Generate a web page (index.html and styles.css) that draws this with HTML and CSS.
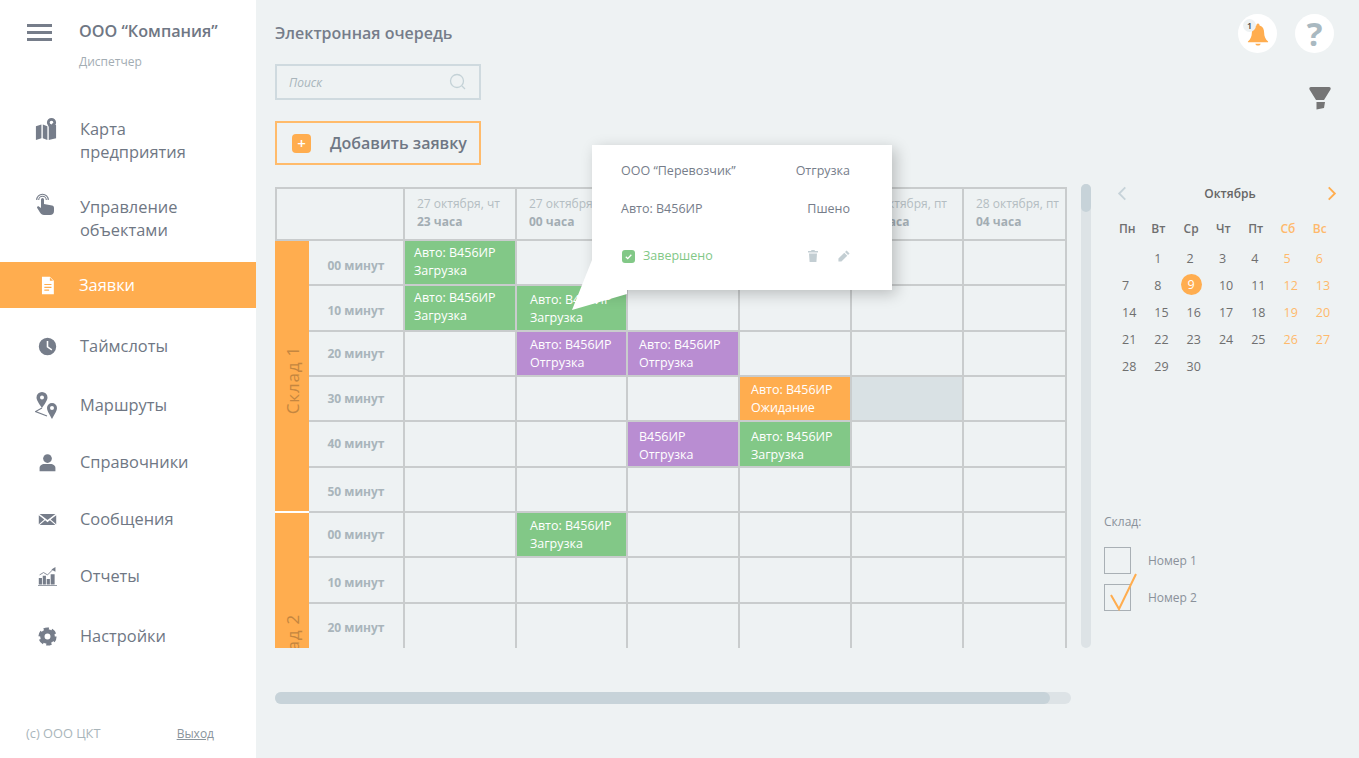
FILE: index.html
```html
<!DOCTYPE html>
<html lang="ru">
<head>
  <meta charset="utf-8">
  <title>Электронная очередь</title>
  <link rel="stylesheet" href="styles.css">
</head>
<body>
<div class="app">
  <aside class="sidebar">
    <div class="brand">
      <div class="burger"><span></span><span></span><span></span></div>
      <div>
        <div class="brand-name">ООО “Компания”</div>
        <div class="brand-role">Диспетчер</div>
      </div>
    </div>

    <nav class="nav">
      <a class="nav-item nav-item-top">
        <svg class="nav-icon" viewBox="0 0 24 24"><path d="M1 9l6-2v15l-6 2zM8.500 7l5 2v15l-5-2zM15 9l2 1 2-4 .5-.500L23 8v14l-8 2z"/><path fill-rule="evenodd" d="M18 0a5 5 0 0 1 5 5c0 2.500-3 6-5 8-2-2-5-5.500-5-8a5 5 0 0 1 5-5zm0 3a2 2 0 1 0 0 4 2 2 0 0 0 0-4z"/></svg>
        <span>Карта<br>предприятия</span>
      </a>
      <a class="nav-item nav-item-top">
        <svg class="nav-icon nav-icon-hand" viewBox="0 0 18 22"><path d="M5 6.500a1.500 1.500 0 0 1 3 0V11l8 1.500c1.200.3 2 1 2 2.500v3c0 2.500-1.500 4-4 4H8c-2 0-3-1-4-2.500L1.200 15c-.7-1.200.8-2.400 2-1.300L5 15z"/><path class="line" d="M2.700 7a3.800 3.800 0 1 1 7.600 0M.7 7a5.800 5.800 0 1 1 11.600 0"/></svg>
        <span>Управление<br>объектами</span>
      </a>
      <a class="nav-item nav-item-active">
        <svg class="nav-icon nav-icon-sm" viewBox="0 0 24 24"><path fill-rule="evenodd" d="M5 1h10l5 5v17H5zm3 9v1.500h9V10zm0 3.500V15h9v-1.500zm0 3.500v1.500h6V17zM15 2v4h4z"/></svg>
        <span>Заявки</span>
      </a>
      <a class="nav-item">
        <svg class="nav-icon nav-icon-sm" viewBox="0 0 24 24"><path fill-rule="evenodd" d="M12 1a11 11 0 1 1 0 22 11 11 0 0 1 0-22zm-1 4v8l6 4 1-1.500-5-3.500V5z"/></svg>
        <span>Таймслоты</span>
      </a>
      <a class="nav-item">
        <svg class="nav-icon nav-icon-route" viewBox="0 0 22 27"><path fill-rule="evenodd" d="M7 0a5.500 5.500 0 0 1 5.500 5.500C12.500 8.500 9 13 7 16 5 13 1.500 8.500 1.500 5.500A5.500 5.500 0 0 1 7 0zm0 3.500a2 2 0 1 0 0 4 2 2 0 0 0 0-4zM17 11a5 5 0 0 1 5 5c0 3-3.200 7.500-5 11-1.800-3.500-5-8-5-11a5 5 0 0 1 5-5zm0 3a2 2 0 1 0 0 4 2 2 0 0 0 0-4z"/><path class="line" d="M7 16l-6.500 3.500L12 24"/></svg>
        <span>Маршруты</span>
      </a>
      <a class="nav-item">
        <svg class="nav-icon nav-icon-sm" viewBox="0 0 24 24"><circle cx="12" cy="7" r="5.500"/><path d="M2 23v-4c0-3 3-5 6-5h8c3 0 6 2 6 5v4z"/></svg>
        <span>Справочники</span>
      </a>
      <a class="nav-item">
        <svg class="nav-icon nav-icon-sm" viewBox="0 0 24 24"><path d="M2 5h20l-10 7.500zM1 6.500l7 5.500-7 6zM23 6.500v11.500l-7-6zM9 13l3 2.500 3-2.500 7 6H2z"/></svg>
        <span>Сообщения</span>
      </a>
      <a class="nav-item">
        <svg class="nav-icon nav-icon-sm" viewBox="0 0 24 24"><path d="M1 14h4v8H1zM6 11h4v11H6zM11 15h4v7h-4zM16 9h5v13h-5zM0 23h24v1H0z"/><path class="line" d="M2 10l5-3 5 3 7-7"/><path d="M22 0v6l-5-3z"/></svg>
        <span>Отчеты</span>
      </a>
      <a class="nav-item">
        <svg class="nav-icon nav-icon-sm" viewBox="0 0 24 24"><circle class="gear-teeth" cx="12" cy="12" r="9.500"/><circle class="gear-ring" cx="12" cy="12" r="6.500"/></svg>
        <span>Настройки</span>
      </a>
    </nav>

    <div class="side-foot">
      <span class="copy">(c) ООО ЦКТ</span>
      <a class="logout">Выход</a>
    </div>
  </aside>

  <main class="main">
    <div class="top">
      <div>
        <h1 class="title">Электронная очередь</h1>
        <div class="search">
          <span>Поиск</span>
          <svg class="search-icon" viewBox="0 0 18 18"><circle cx="8" cy="8" r="6.500"/><path d="M13 13l3 3"/></svg>
        </div>
        <button class="add-btn"><span class="add-icon">+</span>Добавить заявку</button>
      </div>
      <div class="top-right">
        <div class="round-btns">
          <div class="round-btn">
            <svg class="bell" viewBox="0 0 24 24"><path d="M12 0c1 0 1.700 1 1.700 2.200 3.600 1 5 4 5 7.800 0 4 1.300 7 4.300 9.500v1H1v-1c3-2.500 4.300-5.500 4.300-9.500 0-3.800 1.400-6.800 5-7.800C10.300 1 11 0 12 0zM9 22h6c-.5 1.500-1.500 2-3 2s-2.500-.5-3-2z"/></svg>
            <span class="bell-badge">1</span>
          </div>
          <div class="round-btn help">?</div>
        </div>
        <svg class="funnel" viewBox="0 0 24 24"><path d="M3 1h18c1.500 0 2 1 1.500 2.500L16 14H8L1.500 3.500C1 2 1.500 1 3 1zM8.500 16H17l-1 6-7.500 1.500z"/></svg>
      </div>
    </div>

    <div class="board">
      <div class="table-wrap">
        <div class="table">
          <div class="group group-first"><span>Склад 1</span></div>
          <div class="group group-second"><span>Склад 2</span></div>

          <div class="head-blank"></div>
          <div class="head"><span>27 октября, чт</span><b>23 часа</b></div>
          <div class="head"><span>27 октября, чт</span><b>00 часа</b></div>
          <div class="head"><span>28 октября, пт</span><b>01 часа</b></div>
          <div class="head"><span>28 октября, пт</span><b>02 часа</b></div>
          <div class="head"><span>28 октября, пт</span><b>03 часа</b></div>
          <div class="head"><span>28 октября, пт</span><b>04 часа</b></div>

          <div class="label low">00 минут</div>
          <div class="cell ev green tight">Авто: В456ИР<br>Загрузка</div>
          <div class="cell"></div><div class="cell"></div><div class="cell"></div><div class="cell"></div><div class="cell"></div>

          <div class="label low">10 минут</div>
          <div class="cell ev green tight">Авто: В456ИР<br>Загрузка</div>
          <div class="cell ev green wide drop">Авто: В456ИР<br>Загрузка</div>
          <div class="cell"></div><div class="cell"></div><div class="cell"></div><div class="cell"></div>

          <div class="label">20 минут</div>
          <div class="cell"></div>
          <div class="cell ev purple wide">Авто: В456ИР<br>Отгрузка</div>
          <div class="cell ev purple mid">Авто: В456ИР<br>Отгрузка</div>
          <div class="cell"></div><div class="cell"></div><div class="cell"></div>

          <div class="label">30 минут</div>
          <div class="cell"></div><div class="cell"></div><div class="cell"></div>
          <div class="cell ev orange mid">Авто: В456ИР<br>Ожидание</div>
          <div class="cell grey"></div>
          <div class="cell"></div>

          <div class="label">40 минут</div>
          <div class="cell"></div><div class="cell"></div>
          <div class="cell ev purple mid deep">В456ИР<br>Отгрузка</div>
          <div class="cell ev green mid deep">Авто: В456ИР<br>Загрузка</div>
          <div class="cell"></div><div class="cell"></div>

          <div class="label low">50 минут</div>
          <div class="cell"></div><div class="cell"></div><div class="cell"></div><div class="cell"></div><div class="cell"></div><div class="cell"></div>

          <div class="label">00 минут</div>
          <div class="cell"></div>
          <div class="cell ev green wide">Авто: В456ИР<br>Загрузка</div>
          <div class="cell"></div><div class="cell"></div><div class="cell"></div><div class="cell"></div>

          <div class="label low">10 минут</div>
          <div class="cell"></div><div class="cell"></div><div class="cell"></div><div class="cell"></div><div class="cell"></div><div class="cell"></div>

          <div class="label">20 минут</div>
          <div class="cell"></div><div class="cell"></div><div class="cell"></div><div class="cell"></div><div class="cell"></div><div class="cell"></div>
        </div>

        <div class="popup">
          <svg class="popup-tail" viewBox="0 0 60 60"><path d="M22 0L0 55l55-16V0z"/></svg>
          <div class="popup-row"><span>ООО “Перевозчик”</span><span>Отгрузка</span></div>
          <div class="popup-row"><span>Авто: В456ИР</span><span>Пшено</span></div>
          <div class="popup-foot">
            <span class="done-box"><svg viewBox="0 0 12 12"><path d="M3.500 6.200l1.800 1.800 3.300-3.600"/></svg></span>
            <span class="done-text">Завершено</span>
            <svg class="popup-icon" viewBox="0 0 12 12"><path d="M4.500 0h3l.5 1h3v1.500H1V1h3zM2 3.500h8l-.6 8.500H2.600z"/></svg>
            <svg class="popup-icon" viewBox="0 0 14 14"><path d="M10 .5l3.500 3.500-1.800 1.800L8.200 2.300zM7.300 3.200l3.500 3.500L4 13.500H.5V10z"/></svg>
          </div>
        </div>
      </div>

      <div class="vbar"><div class="vbar-thumb"></div></div>

      <div class="side">
        <div class="cal-head">
          <svg class="chev chev-off" viewBox="0 0 10 16"><path d="M8.500 1.500L2 8l6.500 6.500"/></svg>
          <span class="cal-title">Октябрь</span>
          <svg class="chev" viewBox="0 0 10 16"><path d="M1.500 1.500L8 8l-6.500 6.500"/></svg>
        </div>
        <div class="cal-week">
          <span>Пн</span><span>Вт</span><span>Ср</span><span>Чт</span><span>Пт</span><span class="we">Сб</span><span class="we">Вс</span>
        </div>
        <div class="cal-days">
          <span></span><span>1</span><span>2</span><span>3</span><span>4</span><span class="we">5</span><span class="we">6</span>
          <span>7</span><span>8</span><span class="today">9</span><span>10</span><span>11</span><span class="we">12</span><span class="we">13</span>
          <span>14</span><span>15</span><span>16</span><span>17</span><span>18</span><span class="we">19</span><span class="we">20</span>
          <span>21</span><span>22</span><span>23</span><span>24</span><span>25</span><span class="we">26</span><span class="we">27</span>
          <span>28</span><span>29</span><span>30</span>
        </div>

        <div class="stores">
          <div class="stores-title">Склад:</div>
          <div class="store"><span class="box"></span>Номер 1</div>
          <div class="store">
            <span class="box"><svg class="tick" viewBox="0 0 30 40"><path d="M1 22l8 14L26 1"/></svg></span>Номер 2
          </div>
        </div>
      </div>
    </div>

    <div class="hbar"><div class="hbar-thumb"></div></div>
  </main>
</div>
</body>
</html>
```

FILE: styles.css
```css
* {
  box-sizing: border-box;
}

html, body {
  height: 100%;
  margin: 0;
}

body {
  font-family: "Open Sans", "Noto Sans", sans-serif;
  color: #6f7784;
  background-color: #eef2f3;
  overflow: hidden;
}

.app {
  display: flex;
  height: 758px;
}

/* sidebar */
.sidebar {
  width: 256px;
  flex: none;
  background-color: #fff;
  display: flex;
  flex-direction: column;
}

.brand {
  display: flex;
  padding: 21px 0 0 27px;
  height: 118px;
}

.burger {
  width: 25px;
  margin-right: 27px;
  padding-top: 3px;
}

.burger span {
  display: block;
  height: 3px;
  margin-bottom: 4px;
  background-color: #767d8a;
}

.brand-name {
  font-size: 16.200px;
  font-weight: 600;
  line-height: 21px;
}

.brand-role {
  font-size: 12px;
  font-weight: 500;
  line-height: 16px;
  margin-top: 12px;
  color: #a3adb3;
}

.nav {
  display: grid;
  grid-template-rows: 78px 66px 61px 59px 57px 57px 57px 60px 46px;
}

.nav-item {
  display: flex;
  align-items: center;
  height: 46px;
  padding-left: 35px;
  font-size: 16.400px;
  font-weight: 500;
  line-height: 23px;
}

.nav-item span {
  margin: 0 0 2px 23px;
}

.nav-item-top {
  align-items: flex-start;
}

.nav-item-top span {
  margin-top: -1px;
}

.nav-item-active {
  background-color: #ffad4f;
  color: #fff;
}

.nav-item-active span {
  margin-left: 22px;
}

.nav-icon {
  width: 22px;
  height: 22px;
  flex: none;
  fill: #767d8a;
}

.nav-icon .line {
  fill: none;
  stroke: #767d8a;
  stroke-width: 1.100;
}

.nav-icon-sm {
  width: 19px;
  height: 19px;
  margin-left: 3px;
}

.nav-icon-hand {
  margin: -3px 1px 0 -1px;
}

.nav-icon-route {
  height: 27px;
}

.nav-item-active .nav-icon {
  fill: #fff;
}

.gear-teeth {
  fill: none;
  stroke: #767d8a;
  stroke-width: 4;
  stroke-dasharray: 6.400 3.550;
}

.gear-ring {
  fill: none;
  stroke: #767d8a;
  stroke-width: 5.500;
}

.side-foot {
  display: flex;
  justify-content: space-between;
  margin-top: auto;
  padding: 0 42px 16px 26px;
  font-size: 12px;
  line-height: 17px;
  color: #a9b5bb;
}

.copy {
  font-size: 12.800px;
}

.logout {
  color: #8a949b;
  text-decoration: underline;
}

/* main column */
.main {
  flex: 1;
  min-width: 0;
  padding: 0 0 0 19px;
}

.top {
  display: flex;
  justify-content: space-between;
  height: 184px;
}

.title {
  font-size: 16px;
  font-weight: 600;
  line-height: 22px;
  margin: 22px 0 20px;
  color: #767d8a;
}

.search {
  width: 206px;
  height: 36px;
  border: 2px solid #cfdadf;
  display: flex;
  align-items: center;
  justify-content: space-between;
  padding: 0 12px 0 12px;
  font-size: 12px;
  font-style: italic;
  color: #a9b5bb;
}

.search-icon {
  width: 18px;
  height: 18px;
  fill: none;
  stroke: #c4d2d7;
  stroke-width: 1.300;
}

.add-btn {
  display: flex;
  align-items: center;
  width: 206px;
  height: 44px;
  margin-top: 21px;
  padding: 0 0 0 15px;
  border: 2px solid #ffbb6b;
  background: none;
  font-family: inherit;
  font-size: 16px;
  font-weight: 600;
  color: #6f7784;
}

.add-icon {
  width: 19px;
  height: 19px;
  margin-right: 19px;
  border-radius: 4px;
  background-color: #ffad4f;
  color: #fff;
  font-size: 15px;
  line-height: 18px;
  text-align: center;
}

.top-right {
  width: 130px;
  padding: 14px 25px 0 0;
  display: flex;
  flex-direction: column;
  align-items: flex-end;
}

.round-btns {
  display: flex;
  gap: 18px;
}

.round-btn {
  position: relative;
  width: 39px;
  height: 39px;
  border-radius: 50%;
  background-color: #fff;
  display: flex;
  align-items: center;
  justify-content: center;
}

.help {
  font-size: 33px;
  font-weight: 700;
  line-height: 39px;
  color: #a9b9c1;
}

.bell {
  width: 22px;
  height: 27px;
  fill: #ffad4f;
  margin-top: 1px;
}

.bell-badge {
  position: absolute;
  top: 5px;
  left: 5px;
  width: 13px;
  height: 13px;
  border-radius: 50%;
  background-color: #eef2f3;
  font-size: 9px;
  font-weight: 600;
  line-height: 13px;
  text-align: center;
  color: #444;
}

.funnel {
  width: 24px;
  height: 24px;
  margin: 33px 2px 0 0;
  fill: #757575;
}

/* schedule */
.board {
  display: flex;
  align-items: flex-start;
}

.table-wrap {
  position: relative;
  width: 792px;
  height: 464px;
  padding-top: 3px;
}

.table {
  display: grid;
  grid-template-columns: 34px 96px 112px 111px 112px 112px 112px 103px;
  grid-template-rows: 52px repeat(8, 45.330px) 50px;
  grid-auto-rows: 45.330px;
  height: 461px;
  overflow: hidden;
  border-top: 2px solid #c9cccd;
}

.group {
  grid-column: 1;
  padding-top: 8px;
  background-color: #ffad4f;
  border-bottom: 2px solid #fff;
  display: flex;
  align-items: center;
  justify-content: center;
}

.group span {
  writing-mode: vertical-rl;
  transform: rotate(180deg);
  font-size: 17px;
  letter-spacing: .8px;
  color: #c48640;
}

.group-first {
  grid-row: 2 / span 6;
}

.group-second {
  grid-row: 8 / span 6;
  padding: 0 0 4px;
}

.head-blank {
  grid-column: 1 / span 2;
  border-left: 2px solid #c9cccd;
  border-right: 2px solid #c9cccd;
  border-bottom: 2px solid #c9cccd;
}

.head {
  display: flex;
  flex-direction: column;
  padding: 6px 0 0 12px;
  font-size: 12px;
  line-height: 18px;
  color: #b4bdc2;
  border-right: 2px solid #c9cccd;
  border-bottom: 2px solid #c9cccd;
}

.head b {
  font-weight: 700;
  color: #a3adb3;
}

.label {
  display: flex;
  align-items: center;
  justify-content: center;
  font-size: 12px;
  font-weight: 700;
  color: #a9b5bb;
  border-right: 2px solid #c9cccd;
  border-bottom: 2px solid #c9cccd;
}

.low {
  padding-top: 5px;
}

.cell {
  border-right: 2px solid #c9cccd;
  border-bottom: 2px solid #c9cccd;
}

.ev {
  padding: 4px 0 0 9px;
  font-size: 12.500px;
  font-weight: 500;
  line-height: 18px;
  color: #fff;
  white-space: nowrap;
  overflow: hidden;
}

.tight {
  padding-top: 3px;
}

.drop {
  padding-top: 5px;
}

.deep {
  padding-top: 6px;
}

.mid {
  padding-left: 11px;
}

.wide {
  padding-left: 13px;
}

.green {
  background-color: #82c887;
}

.purple {
  background-color: #b98dd2;
}

.orange {
  background-color: #ffad4f;
}

.grey {
  background-color: #d9e1e4;
}

/* popup over the table */
.popup {
  position: absolute;
  left: 317px;
  top: -39px;
  width: 300px;
  height: 145px;
  padding: 16px 42px 0 29px;
  background-color: #fff;
  box-shadow: 4px 4px 14px rgba(0, 0, 0, .22);
  font-size: 12.500px;
  font-weight: 500;
  color: #767d8a;
}

.popup-tail {
  position: absolute;
  left: -20px;
  top: 110px;
  width: 60px;
  height: 60px;
  fill: #fff;
}

.popup-row {
  position: relative;
  display: flex;
  justify-content: space-between;
  line-height: 20px;
  margin-bottom: 16px;
}

.popup-row + .popup-row {
  margin-top: 18px;
}

.popup-foot {
  position: relative;
  display: flex;
  align-items: center;
  margin-top: 27px;
  line-height: 20px;
}

.done-box {
  width: 13px;
  height: 13px;
  margin: 0 8px 0 1px;
  border-radius: 3px;
  background-color: #82c887;
}

.done-box svg {
  display: block;
  fill: none;
  stroke: #fff;
  stroke-width: 1.200;
}

.done-text {
  color: #82c887;
  margin-right: auto;
}

.popup-icon {
  width: 12px;
  height: 12px;
  margin-left: 19px;
  fill: #c3ced3;
}

.vbar {
  width: 10px;
  height: 464px;
  margin-left: 14px;
  border-radius: 5px;
  background-color: #dde3e6;
}

.vbar-thumb {
  height: 28px;
  border-radius: 5px;
  background-color: #c7d3d9;
}

/* calendar and filter */
.side {
  width: 236px;
  margin-left: 13px;
}

.cal-head {
  display: flex;
  justify-content: space-between;
  align-items: center;
  height: 18px;
  padding: 0 3px 0 13px;
  font-size: 12px;
  font-weight: 600;
  color: #666;
}

.cal-title {
  margin-left: 6px;
}

.chev {
  width: 10px;
  height: 15px;
  fill: none;
  stroke: #ffad4f;
  stroke-width: 2;
}

.chev-off {
  stroke: #c7d3d9;
}

.cal-week,
.cal-days {
  display: grid;
  grid-template-columns: repeat(7, 32.300px);
  font-size: 12px;
  color: #6f6f6f;
}

.cal-week {
  margin: 18px 0 0 15px;
  font-weight: 600;
  line-height: 18px;
}

.cal-days {
  margin: 7px 0 0 18px;
  line-height: 27px;
  font-size: 12.500px;
}

.we {
  color: #ffb96b;
}

.today {
  width: 21px;
  height: 21px;
  margin: 2px 0 0 -6px;
  border-radius: 50%;
  background-color: #ffad4f;
  color: #fff;
  line-height: 21px;
  text-align: center;
}

.stores {
  margin-top: 133px;
  font-size: 12px;
  font-weight: 500;
  color: #8a919a;
}

.stores-title {
  line-height: 18px;
  margin-bottom: 16px;
}

.store {
  display: flex;
  align-items: center;
  height: 27px;
  margin-bottom: 10px;
}

.box {
  position: relative;
  width: 27px;
  height: 27px;
  margin-right: 17px;
  border: 1px solid #a9b0b5;
}

.tick {
  position: absolute;
  left: 5px;
  top: -12px;
  width: 30px;
  height: 40px;
  fill: none;
  stroke: #ffad4f;
  stroke-width: 2;
}

.hbar {
  width: 796px;
  height: 12px;
  margin-top: 44px;
  border-radius: 6px;
  background-color: #dde3e6;
}

.hbar-thumb {
  width: 775px;
  height: 12px;
  border-radius: 6px;
  background-color: #c7d3d9;
}
```
